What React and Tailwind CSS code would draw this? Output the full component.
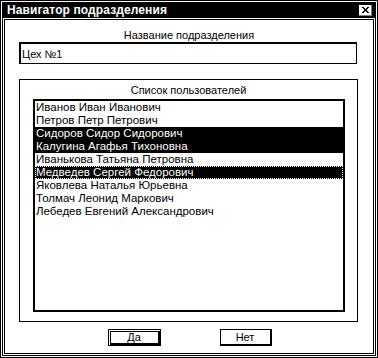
import React from "react";

const users = [
  { name: "Иванов Иван Иванович" },
  { name: "Петров Петр Петрович" },
  { name: "Сидоров Сидор Сидорович", sel: true },
  { name: "Калугина Агафья Тихоновна", sel: true },
  { name: "Иванькова Татьяна Петровна" },
  { name: "Медведев Сергей Федорович", sel: true, focus: true },
  { name: "Яковлева Наталья Юрьевна" },
  { name: "Толмач Леонид Маркович" },
  { name: "Лебедев Евгений Александрович" },
];

export default function App() {
  return (
    <div
      className="w-[378px] h-[358px] bg-white border border-black p-px text-black"
      style={{ fontFamily: '"Liberation Sans", Arial, sans-serif' }}
    >
      <div className="h-full border border-black flex flex-col">
        {/* title bar */}
        <div className="h-[15px] bg-black flex items-center justify-between pl-[4px] pr-[3px]">
          <span className="text-white font-bold text-[12px] leading-[15px] tracking-[0.1px]">
            Навигатор подразделения
          </span>
          <div className="w-[13px] h-[11px] bg-white flex items-center justify-center border-r border-b border-[#808080]">
            <svg width="7" height="6" viewBox="0 0 7 6">
              <path d="M0 0h2v1h1v1h1V1h1V0h2v1H6v1H5v2h1v1h1v1H5V5H4V4H3v1H2v1H0V5h1V4h1V2H1V1H0z" fill="black" />
            </svg>
          </div>
        </div>
        {/* inner frame */}
        <div className="flex-1 p-px">
          <div className="h-full border border-black flex flex-col">
            <div className="mt-[8px] h-[14px] text-[11px] leading-[14px] text-center">
              Название подразделения
            </div>
            <div className="ml-[14px] w-[338px] h-[22px] border-l-2 border-t-2 border-r border-b border-black flex items-center pl-[1px] text-[11px] leading-[14px]">
              Цех №1
            </div>
            <div className="ml-[14px] mt-[15px] w-[339px] h-[243px] border border-black flex flex-col">
              <div className="mt-[3px] h-[14px] text-[11px] leading-[14px] text-center">
                Список пользователей
              </div>
              <div className="ml-[13px] mt-[2px] w-[312px] h-[213px] border-2 border-black flex flex-col">
                {users.map((u) => (
                  <div
                    key={u.name}
                    className={
                      "h-[13px] text-[11.5px] leading-[13px] pl-[1px] whitespace-nowrap " +
                      (u.sel ? "bg-black text-white " : "") +
                      (u.focus ? "outline outline-1 outline-dotted outline-white -outline-offset-1" : "")
                    }
                  >
                    {u.name}
                  </div>
                ))}
              </div>
            </div>
            <div className="mt-[7px] flex justify-center gap-[59px] pl-[1px]">
              <div className="w-[53px] h-[17px] border border-black pl-px pt-px flex">
                <div className="flex-1 border-l border-t border-r-2 border-b-2 border-black flex items-center justify-center text-[11px] leading-[11px]">
                  Да
                </div>
              </div>
              <div className="w-[52px] h-[17px] border-l border-t border-r-2 border-b-2 border-black flex items-center justify-center text-[11px] leading-[11px]">
                Нет
              </div>
            </div>
          </div>
        </div>
      </div>
    </div>
  );
}
